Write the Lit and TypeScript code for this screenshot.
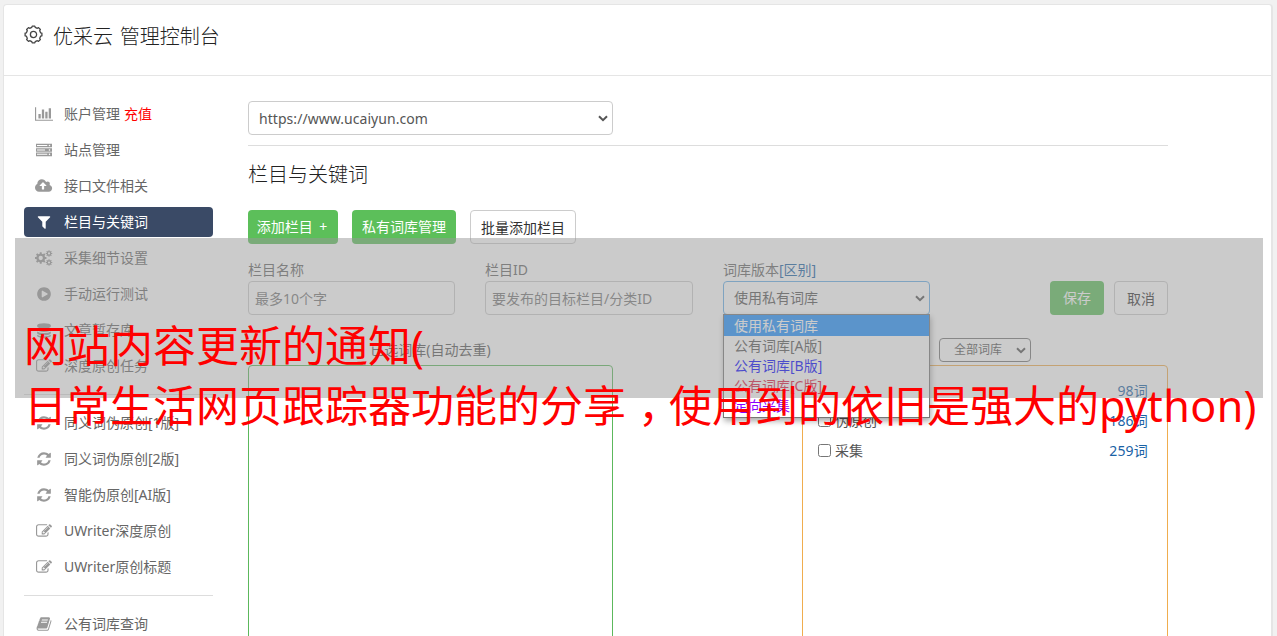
import { LitElement, html, css, svg, nothing } from "lit";
import { customElement } from "lit/decorators.js";
import { classMap } from "lit/directives/class-map.js";

const gear = (cx: number, cy: number, outer: number, inner: number, hole: number, teeth = 8): string => {
  const pts: string[] = [];
  const step = (Math.PI * 2) / teeth;
  for (let i = 0; i < teeth; i++) {
    const a = i * step - Math.PI / 2;
    const corners: [number, number][] = [[-0.3, inner], [-0.2, outer], [0.2, outer], [0.3, inner]];
    for (const [k, r] of corners) {
      pts.push(`${(cx + r * Math.cos(a + k * step)).toFixed(2)} ${(cy + r * Math.sin(a + k * step)).toFixed(2)}`);
    }
  }
  return `M${pts.join("L")}ZM${cx - hole} ${cy}a${hole} ${hole} 0 1 0 ${hole * 2} 0a${hole} ${hole} 0 1 0 ${-hole * 2} 0Z`;
};

const FA: Record<string, { w: number; d: string }> = {
  chart: { w: 2048, d: "M640 896v512h-256v-512h256zm384-512v1024h-256v-1024h256zm1024 1152v128h-2048v-1536h128v1408h1920zm-640-896v768h-256v-768h256zm384-384v1152h-256v-1152h256z" },
  server: { w: 1792, d: "M0 192h1792v400h-1792zM112 336v112h1152v-112zM1420 392a90 90 0 1 0 180 0a90 90 0 1 0-180 0zM0 688h1792v400h-1792zM112 832v112h900v-112zM1420 888a90 90 0 1 0 180 0a90 90 0 1 0-180 0zM0 1184h1792v400h-1792zM112 1328v112h1152v-112zM1420 1384a90 90 0 1 0 180 0a90 90 0 1 0-180 0z" },
  cloud: { w: 1920, d: "M1280 864q0-14-9-23l-352-352q-9-9-23-9t-23 9l-351 351q-10 12-10 24 0 14 9 23t23 9h224v352q0 13 9.5 22.5t22.5 9.5h192q13 0 22.5-9.5t9.5-22.5v-352h224q13 0 22.5-9.5t9.5-22.5zm640 288q0 159-112.5 271.5t-271.5 112.5h-1088q-185 0-316.5-131.5t-131.5-316.5q0-130 70-240t188-165q-2-30-2-43 0-212 150-362t362-150q156 0 285.5 87t188.5 231q71-62 166-62 106 0 181 75t75 181q0 76-41 138 130 31 213.5 135.5t83.5 238.5z" },
  filter: { w: 1792, d: "M1595 295q17 41-14 70l-493 493v742q0 42-39 59-13 5-25 5-27 0-45-19l-256-256q-19-19-19-45v-486l-493-493q-31-29-14-70 17-39 59-39h1280q42 0 59 39z" },
  cogs: { w: 1920, d: gear(640, 896, 650, 500, 240) + gear(1570, 390, 370, 270, 125) + gear(1570, 1400, 370, 270, 125) },
  play: { w: 1792, d: "M896 128q209 0 385.5 103t279.5 279.5 103 385.5-103 385.5-279.5 279.5-385.5 103-385.5-103-279.5-279.5-103-385.5 103-385.5 279.5-279.5 385.5-103zm384 823q32-18 32-55t-32-55l-544-320q-31-19-64-1-32 19-32 56v640q0 37 32 56 16 8 32 8 17 0 32-9z" },
  database: { w: 1792, d: "M128 384a768 256 0 0 1 1536 0v100a768 256 0 0 1-1536 0zM128 670q240 170 768 170t768-170v200a768 240 0 0 1-1536 0zM128 1054q240 170 768 170t768-170v200a768 240 0 0 1-1536 0zM128 1438q240 170 768 170t768-170v100a768 256 0 0 1-1536 0z" },
  edit: { w: 1792, d: "M888 1184l116-116-152-152-116 116v56h96v96h56zm440-720q-16-16-33 1l-350 350q-17 17-1 33t33-1l350-350q17-17 1-33zm80 594v190q0 119-84.5 203.5t-203.5 84.5h-832q-119 0-203.5-84.5t-84.5-203.5v-832q0-119 84.5-203.5t203.5-84.5h832q63 0 117 25 15 7 18 23 3 17-9 29l-49 49q-14 14-32 8-23-6-45-6h-832q-66 0-113 47t-47 113v832q0 66 47 113t113 47h832q66 0 113-47t47-113v-126q0-13 9-22l64-64q15-15 35-7t20 29zm-96-738l288 288-672 672h-288v-288zm444 132l-92 92-288-288 92-92q28-28 68-28t68 28l152 152q28 28 28 68t-28 68z" },
  refresh: { w: 1792, d: "M1639 1056q0 5-1 7-64 268-268 434.5t-478 166.5q-146 0-282.5-55t-243.5-157l-129 129q-19 19-45 19t-45-19-19-45v-448q0-26 19-45t45-19h448q26 0 45 19t19 45-19 45l-137 137q71 66 161 102t187 36q134 0 250-65t186-179q11-17 53-117 8-23 30-23h192q13 0 22.5 9.5t9.5 22.5zm25-800v448q0 26-19 45t-45 19h-448q-26 0-45-19t-19-45 19-45l138-138q-148-137-349-137-134 0-250 65t-186 179q-11 17-53 117-8 23-30 23h-199q-13 0-22.5-9.5t-9.5-22.5v-7q65-268 270-434.5t480-166.5q146 0 284 55.5t245 156.5l130-129q19-19 45-19t45 19 19 45z" },
  book: { w: 1792, d: "M1703 478q40 57 18 129l-275 906q-19 64-76.5 107.5t-122.5 43.5h-923q-77 0-148.5-53.5t-99.5-131.5q-24-67-2-127 0-4 3-27t4-37q1-8-3-21.5t-3-19.5q2-11 8-21t16.5-23.5 16.5-23.5q23-38 45-91.5t30-91.5q3-10 .5-30t-.5-28q3-11 17-28t17-23q21-36 42-92t25-90q1-9-2.5-32t.5-28q4-13 22-30.5t22-22.5q19-26 42.5-84.5t27.5-96.5q1-8-3-25.5t-2-26.5q2-8 9-18t18-23 17-21q8-12 16.5-30.5t15-35 16-36 19.5-32 26.5-23.5 36-11.5 47.5 5.5l-1 3q38-9 51-9h761q74 0 114 56t18 130l-274 906q-36 119-71.5 153.5t-128.5 34.5h-869q-27 0-38 15-11 16-1 43 24 70 144 70h923q29 0 56-15.5t35-41.5l300-987q7-22 5-57 38 15 59 43zm-1064 2q-4 13 2 22.5t20 9.5h608q13 0 25.5-9.5t16.5-22.5l21-64q4-13-2-22.5t-20-9.5h-608q-13 0-25.5 9.5t-16.5 22.5zm-83 256q-4 13 2 22.5t20 9.5h608q13 0 25.5-9.5t16.5-22.5l21-64q4-13-2-22.5t-20-9.5h-608q-13 0-25.5 9.5t-16.5 22.5z" },
};

const icon = (name: string) => {
  const { w, d } = FA[name];
  return html`<svg class="ico" width=${(w / 1792) * 16} height="16" viewBox="0 0 ${w} 1792">${svg`<path fill="currentColor" fill-rule="evenodd" d=${d}></path>`}</svg>`;
};

const chevron = html`<svg class="chev" width="10" height="7" viewBox="0 0 10 7"><path d="M1 1.2L5 5.2L9 1.2" fill="none" stroke="currentColor" stroke-width="2"></path></svg>`;

interface Item { icon: string; label: string; extra?: string; active?: boolean }

const GROUPS: Item[][] = [
  [
    { icon: "chart", label: "账户管理", extra: "充值" },
    { icon: "server", label: "站点管理" },
    { icon: "cloud", label: "接口文件相关" },
    { icon: "filter", label: "栏目与关键词", active: true },
    { icon: "cogs", label: "采集细节设置" },
    { icon: "play", label: "手动运行测试" },
    { icon: "database", label: "文章暂存库" },
    { icon: "edit", label: "深度原创任务" },
  ],
  [
    { icon: "refresh", label: "同义词伪原创[1版]" },
    { icon: "refresh", label: "同义词伪原创[2版]" },
    { icon: "refresh", label: "智能伪原创[AI版]" },
    { icon: "edit", label: "UWriter深度原创" },
    { icon: "edit", label: "UWriter原创标题" },
  ],
  [{ icon: "book", label: "公有词库查询" }],
];

const OPTIONS = [
  { label: "使用私有词库", tone: "sel" },
  { label: "公有词库[A版]", tone: "plain" },
  { label: "公有词库[B版]", tone: "blue" },
  { label: "公有词库[C版]", tone: "crimson" },
  { label: "定向采集", tone: "violet" },
];

const WORDS = [
  { name: "优采云", count: "98词" },
  { name: "伪原创", count: "186词" },
  { name: "采集", count: "259词" },
];

@customElement("app-root")
export class AppRoot extends LitElement {
  static styles = css`
    :host {
      display: block;
      position: relative;
      height: 636px;
      overflow: hidden;
      box-sizing: border-box;
      padding: 4px 4px 0 3px;
      background: #f1f1f1;
      color: #555;
      font: 14px/20px "Noto Sans", "Noto Sans CJK SC", sans-serif;
      white-space: nowrap;
    }
    * { box-sizing: border-box; }
    .panel {
      height: 660px;
      background: #fff;
      border: 1px solid #e5e5e5;
      border-right-width: 2px;
      border-radius: 4px;
    }
    .head {
      display: flex;
      align-items: center;
      gap: 10px;
      height: 71px;
      padding: 0 20px 8px;
      border-bottom: 1px solid #e5e5e5;
      color: #222;
      font-size: 20px;
      font-weight: 300;
      word-spacing: 1.5px;
    }
    .head svg { margin-top: -3px; }
    .head span { padding-top: 1px; }
    .body { display: flex; padding: 23px 0 0 20px; }
    .side { width: 189px; margin-right: 35px; }
    .item {
      display: flex;
      align-items: center;
      height: 30px;
      margin-bottom: 6px;
      border-radius: 4px;
      color: #666;
    }
    .slot { display: flex; justify-content: center; width: 40px; color: #999; }
    .item.active { background: #3a4a66; color: #fff; }
    .item.active .slot { color: #fff; }
    .extra { margin-left: 4px; color: #f00; }
    .rule { height: 1px; background: #ddd; }
    .side .rule { margin: 13px 0; }
    .main { width: 920px; padding-top: 2px; }
    .field {
      display: flex;
      align-items: center;
      height: 34px;
      padding: 1px 6px 0;
      border: 1px solid #ccc;
      border-radius: 4px;
      background: #fff;
    }
    .select { justify-content: space-between; padding: 0 4px 0 10px; }
    .site { width: 365px; margin-bottom: 10px; letter-spacing: 0.05px; }
    .site span { padding-top: 2px; }
    h2 { margin: 15px 0 21px; font-weight: 300; font-size: 20px; line-height: 28px; color: #222; }
    .row { display: flex; }
    .btn {
      display: flex;
      align-items: center;
      justify-content: center;
      height: 34px;
      border-radius: 4px;
      background: #5cbf5a;
      color: #fff;
    }
    .btn.line { padding-top: 1px; background: #fff; border: 1px solid #ccc; color: #333; }
    .add { width: 90px; margin-right: 14px; padding-right: 2px; word-spacing: 3px; }
    .manage { width: 104px; margin-right: 14px; }
    .batch { width: 106px; }
    .form { margin-top: 15px; align-items: flex-end; }
    .cell { width: 207px; margin-right: 30px; }
    .cell.wide { width: 208px; }
    .cell .cap { height: 22px; line-height: 22px; color: #666; }
    .cell a { color: #1a62a5; }
    .ph { color: #777; }
    .focus { border-color: #66afe9; }
    .lib { position: relative; }
    .menu {
      position: absolute;
      z-index: 2;
      top: 55px;
      left: 0;
      width: 207px;
      padding-bottom: 1px;
      border: 1px solid #767676;
      background: #fff;
      box-shadow: 1px 3px 6px rgba(0, 0, 0, 0.35);
    }
    .opt { height: 20px; padding-left: 10px; line-height: 19px; }
    .opt.sel { height: 21px; line-height: 21px; background: #1e90ff; color: #fff; }
    .opt.plain { color: #555; }
    .opt.blue { color: #00f; }
    .opt.crimson { color: #dc143c; }
    .opt.violet { color: #8a00ff; }
    .save { width: 54px; margin-left: 90px; margin-right: 10px; }
    .cancel { width: 54px; }
    .lists { justify-content: space-between; margin-top: 23px; }
    .col { width: 365px; }
    .col.pool { width: 366px; }
    .cap2 { display: flex; height: 24px; margin-bottom: 3px; line-height: 24px; justify-content: center; }
    .cap2.right { justify-content: flex-end; padding-right: 137px; }
    .small { width: 92px; height: 24px; padding: 0 4px 0 14px; border-color: #767676; font-size: 12px; }
    .box { height: 320px; border: 1px solid #5cb85c; border-radius: 4px; }
    .box.orange { border-color: #f0ad4e; padding: 10px 19px 0 15px; }
    .word { display: flex; align-items: center; height: 30px; }
    .check { width: 13px; height: 13px; margin: -2px 4px 0 0; border: 1px solid #767676; border-radius: 2.5px; background: #fff; }
    .count { margin-left: auto; color: #1a62a5; letter-spacing: 0.2px; }
    .banner {
      position: absolute;
      z-index: 5;
      left: 15px;
      top: 238px;
      width: 1248px;
      height: 160px;
      padding: 78px 0 0 9px;
      background: rgba(151, 151, 151, 0.5);
      color: #f00;
      font-size: 43px;
      line-height: 60px;
    }
    .comma { padding-left: 12px; margin-right: -12px; }
    .latin { letter-spacing: 0.4px; }
  `;

  private item(i: Item) {
    return html`<div class=${classMap({ item: true, active: !!i.active })}>
      <span class="slot">${icon(i.icon)}</span><span>${i.label}</span>${i.extra ? html`<span class="extra">${i.extra}</span>` : nothing}
    </div>`;
  }

  render() {
    return html`
      <div class="panel">
        <div class="head">
          <svg width="19" height="19" viewBox="0 0 19 19" fill="none" stroke="#444" stroke-width="1.3" stroke-linejoin="round">
            <path d=${gear(9.5, 9.5, 8.5, 7.3, 3.1)}></path>
          </svg>
          <span>优采云 管理控制台</span>
        </div>
        <div class="body">
          <div class="side">
            ${GROUPS.map((g, n) => html`${n ? html`<div class="rule"></div>` : nothing}${g.map((i) => this.item(i))}`)}
          </div>
          <div class="main">
            <div class="field select site"><span>https://www.ucaiyun.com</span>${chevron}</div>
            <div class="rule"></div>
            <h2>栏目与关键词</h2>
            <div class="row">
              <div class="btn add">添加栏目 +</div>
              <div class="btn manage">私有词库管理</div>
              <div class="btn line batch">批量添加栏目</div>
            </div>
            <div class="row form">
              <div class="cell"><div class="cap">栏目名称</div><div class="field ph">最多10个字</div></div>
              <div class="cell wide"><div class="cap">栏目ID</div><div class="field ph">要发布的目标栏目/分类ID</div></div>
              <div class="cell lib">
                <div class="cap">词库版本<a>[区别]</a></div>
                <div class="field select focus"><span>使用私有词库</span>${chevron}</div>
                <div class="menu">${OPTIONS.map((o) => html`<div class="opt ${o.tone}">${o.label}</div>`)}</div>
              </div>
              <div class="btn save">保存</div>
              <div class="btn line cancel">取消</div>
            </div>
            <div class="row lists">
              <div class="col"><div class="cap2">已选词库(自动去重)</div><div class="box"></div></div>
              <div class="col pool">
                <div class="cap2 right"><div class="field select small"><span>全部词库</span>${chevron}</div></div>
                <div class="box orange">
                  ${WORDS.map((w) => html`<div class="word"><span class="check"></span><span>${w.name}</span><span class="count">${w.count}</span></div>`)}
                </div>
              </div>
            </div>
          </div>
        </div>
      </div>
      <div class="banner">
        <div>网站内容更新的通知(</div>
        <div>日常生活网页跟踪器功能的分享<span class="comma">，</span>使用到的依旧是强大的<span class="latin">python)</span></div>
      </div>
    `;
  }
}
